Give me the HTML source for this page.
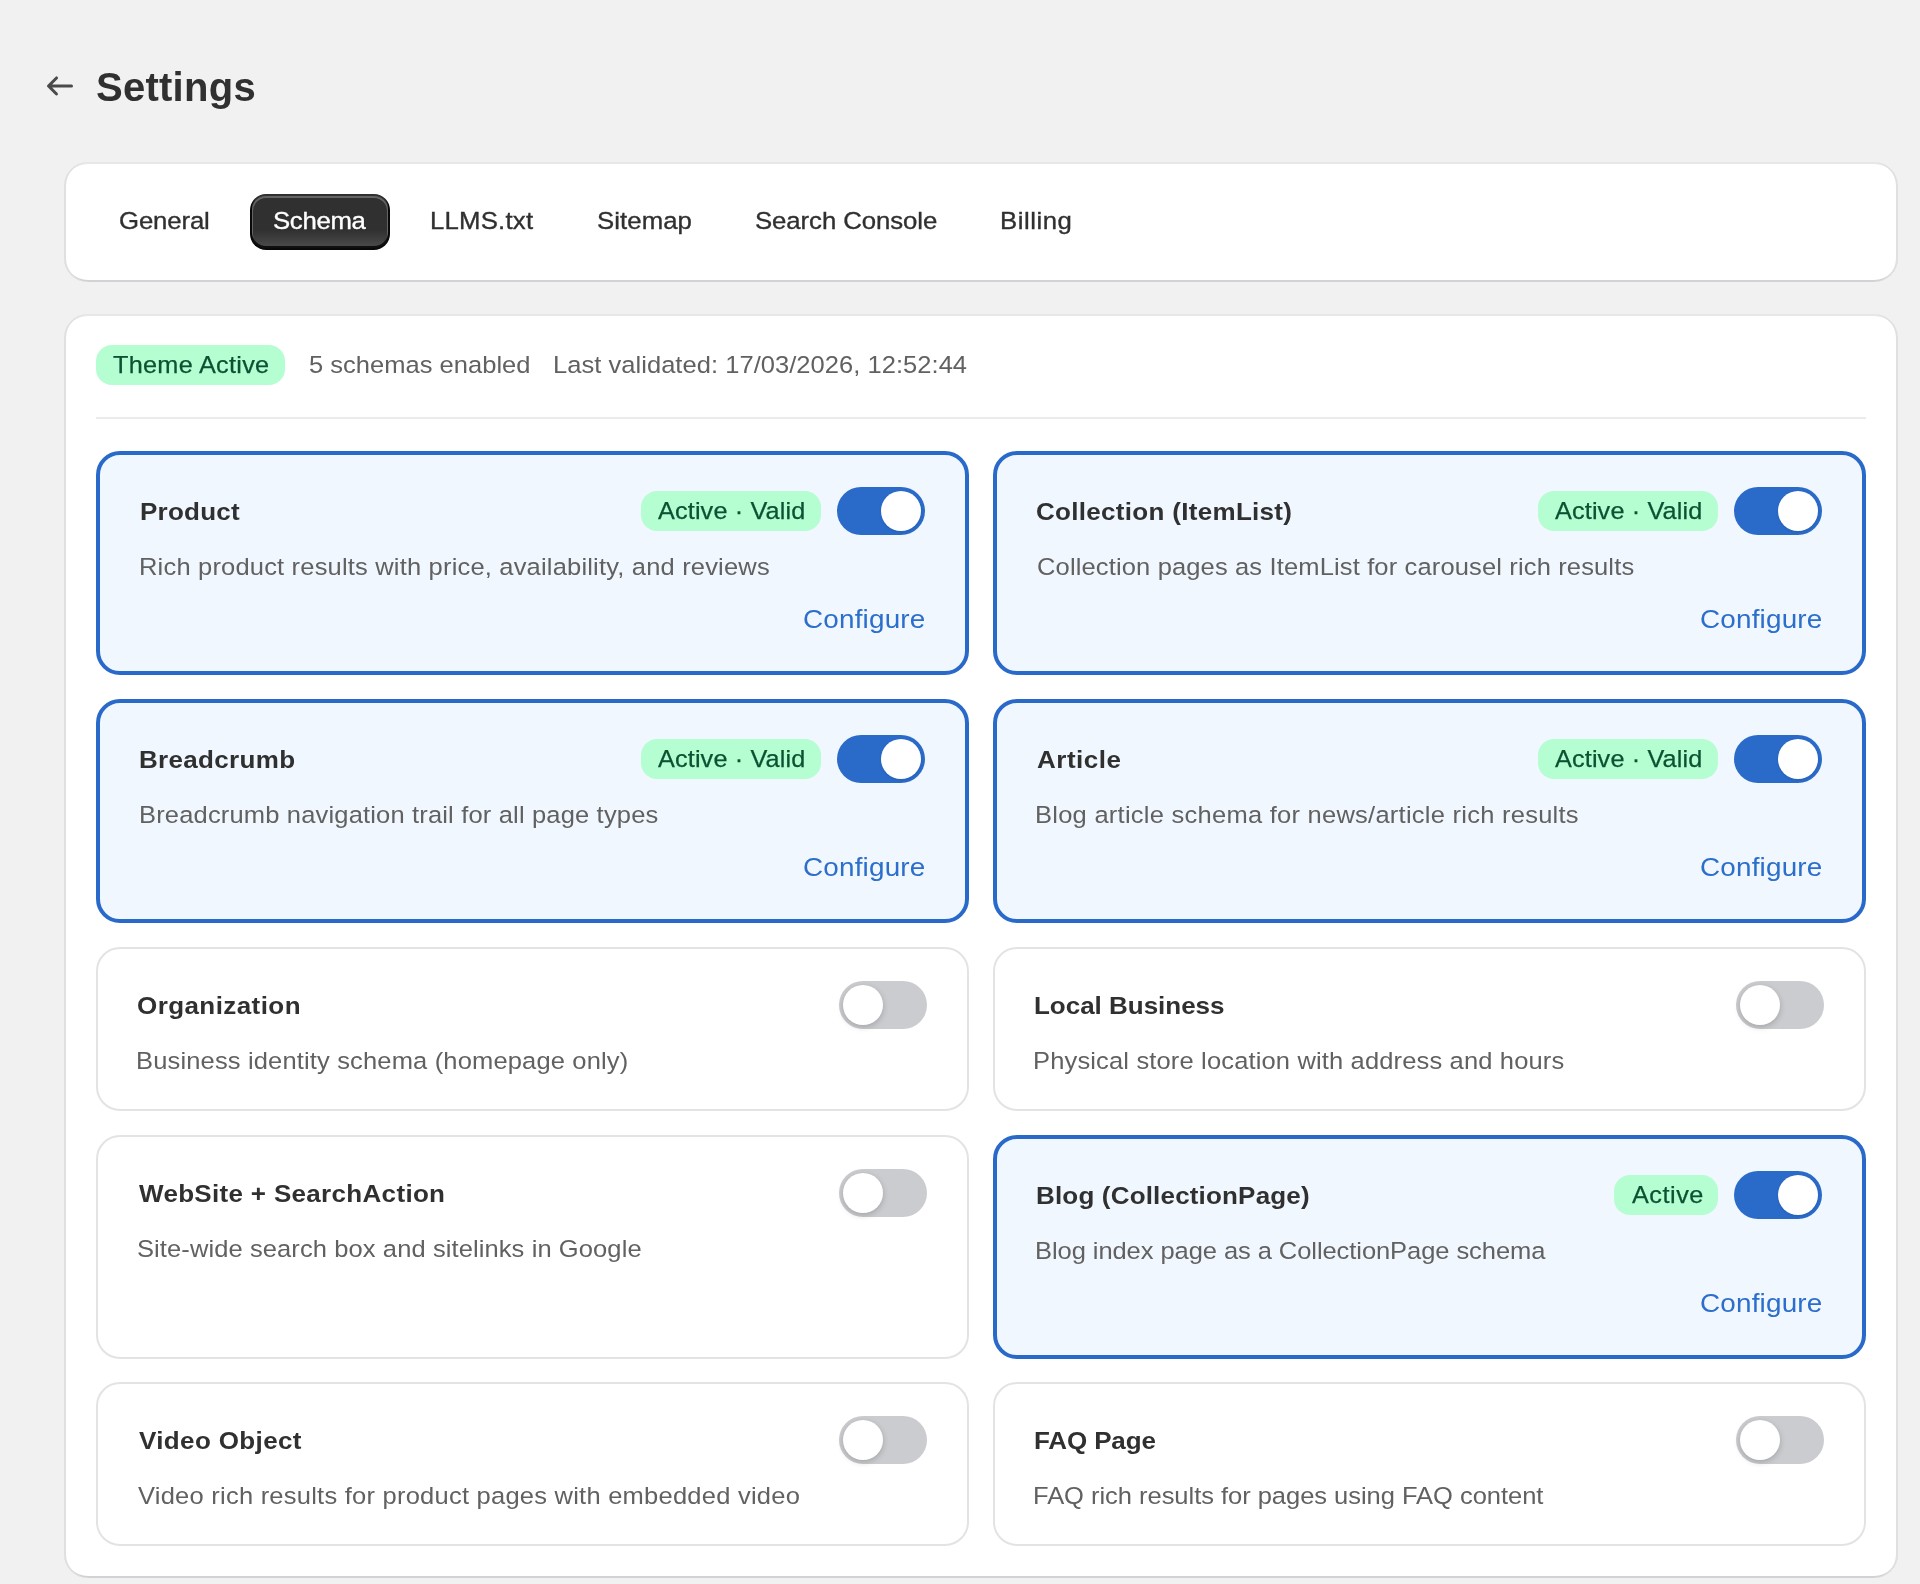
<!DOCTYPE html>
<html lang="en">
<head>
<meta charset="utf-8">
<title>Settings</title>
<style>
*{box-sizing:border-box;margin:0;padding:0}
html,body{width:1920px;height:1584px;overflow:hidden;background:#f1f1f1}
body{font-family:"Liberation Sans",Arial,sans-serif;color:#303030;position:relative}
.abs{position:absolute}
.x{position:absolute;white-space:nowrap;height:40px;line-height:40px;transform-origin:0 0}
.layer{position:absolute;left:0;top:0;width:1920px;height:1584px;will-change:transform}
.back{left:40px;top:65.75px;width:40px;height:40px}
.h1{font-size:40.0px;font-weight:700;color:#303030}
.panel{background:#fff;border-radius:24px;box-shadow:inset 2px 0 0 #dfe0e2,inset -2px 0 0 #dfe0e2,inset 0 -2px 0 #d1d2d5,inset 0 2px 0 #e7e7e9}
.tabs{left:64px;top:162px;width:1834px;height:120px}
.main{left:64px;top:314px;width:1834px;height:1264px}
.tab{transform:scaleX(1.06);font-size:24.3px;color:#303030;-webkit-text-stroke:0.35px #303030}
.tab.on{color:#fff;-webkit-text-stroke:0.35px #fff}
.pill{left:250px;top:194px;width:140px;height:56px;border-radius:16px;background:linear-gradient(180deg,rgba(48,48,48,0) 63.53%,rgba(255,255,255,.15) 100%) #303030;box-shadow:inset 0 -2px 0 2px rgba(0,0,0,.8),inset 0 0 0 2px #303030,inset 0 1px 0 3px rgba(255,255,255,.25)}
.badge{position:absolute;background:#b4fed2;border-radius:16px;height:40px}
.bt{transform:scaleX(1.04);font-size:24.3px;color:#0c5132;-webkit-text-stroke:0.25px #0c5132}
.meta{transform:scaleX(1.05);font-size:24.3px;color:#616161}
.rule{left:96px;top:417px;width:1770px;height:2px;background:#ebebeb}
.card{position:absolute;width:873px;border-radius:24px}
.card.a{border:4px solid #2869ca;background:#f1f7fe;height:224px}
.card.i{border:2px solid #e2e3e5;background:#fff;height:164px}
.card.i.tall{height:224px}
.t{transform:scaleX(1.07);font-size:24.3px;font-weight:700;color:#303030}
.d{transform:scaleX(1.05);font-size:24.3px;color:#616161}
.cfg{transform:scaleX(1.06);font-size:26.3px;color:#2c6ecb}
.tg{position:absolute;width:88px;height:48px;border-radius:24px}
.tg.on{background:#2a6bca}
.tg.off{background:#cbcccf}
.tg i{position:absolute;top:4px;width:40px;height:40px;border-radius:50%;background:#fff;box-shadow:0 2px 6px rgba(0,0,0,.2)}
.tg.on i{right:4px;box-shadow:0 1px 3px rgba(0,0,0,.12)}
.tg.off i{left:4px}
</style>
</head>
<body>
<div class="layer">
<svg class="abs back" viewBox="0 0 20 20" fill="#4a4a4a"><path d="M16.5 10a.75.75 0 0 1-.75.75h-9.69l2.72 2.72a.75.75 0 0 1-1.06 1.06l-4-4a.75.75 0 0 1 0-1.06l4-4a.75.75 0 1 1 1.06 1.06l-2.72 2.72h9.69a.75.75 0 0 1 .75.75Z"/></svg>
<h1 class="x h1" style="left:96.00px;top:66.64px;letter-spacing:0.262px">Settings</h1>
<div class="abs panel tabs"></div>
<div class="abs pill"></div>
<div class="x tab" style="left:119.49px;top:200.98px;letter-spacing:-0.126px">General</div>
<div class="x tab on" style="left:273.45px;top:200.98px;letter-spacing:-0.297px">Schema</div>
<div class="x tab" style="left:429.88px;top:200.98px;letter-spacing:0.195px">LLMS.txt</div>
<div class="x tab" style="left:596.72px;top:200.98px;letter-spacing:0.072px">Sitemap</div>
<div class="x tab" style="left:755.04px;top:200.98px;letter-spacing:-0.070px">Search Console</div>
<div class="x tab" style="left:999.88px;top:200.98px;letter-spacing:0.489px">Billing</div>
<div class="abs panel main"></div>
<div class="badge" style="left:96px;top:345px;width:188.5px"></div>
<div class="x bt" style="left:112.91px;top:345.18px;letter-spacing:0.266px">Theme Active</div>
<div class="x meta" style="left:309.09px;top:345.18px;letter-spacing:0.012px">5 schemas enabled</div>
<div class="x meta" style="left:553.40px;top:345.18px;letter-spacing:0.035px">Last validated: 17/03/2026, 12:52:44</div>
<div class="abs rule"></div>
<div class="card a" style="left:96px;top:451px"></div>
<div class="tg on" style="left:837px;top:487px"><i></i></div>
<div class="badge" style="left:640.8px;top:491px;width:180.5px"></div>
<div class="x bt" style="left:658.28px;top:490.98px;letter-spacing:0.119px">Active · Valid</div>
<a class="x cfg" style="left:803.16px;top:598.89px;letter-spacing:0.166px">Configure</a>
<h2 class="x t" style="left:139.91px;top:491.58px;letter-spacing:0.219px">Product</h2>
<p class="x d" style="left:139.40px;top:546.58px;letter-spacing:0.169px">Rich product results with price, availability, and reviews</p>
<div class="card a" style="left:993px;top:451px"></div>
<div class="tg on" style="left:1734px;top:487px"><i></i></div>
<div class="badge" style="left:1537.8px;top:491px;width:180.5px"></div>
<div class="x bt" style="left:1555.28px;top:490.98px;letter-spacing:0.119px">Active · Valid</div>
<a class="x cfg" style="left:1700.16px;top:598.89px;letter-spacing:0.166px">Configure</a>
<h2 class="x t" style="left:1036.43px;top:491.58px;letter-spacing:0.286px">Collection (ItemList)</h2>
<p class="x d" style="left:1036.60px;top:546.58px;letter-spacing:0.131px">Collection pages as ItemList for carousel rich results</p>
<div class="card a" style="left:96px;top:699px"></div>
<div class="tg on" style="left:837px;top:735px"><i></i></div>
<div class="badge" style="left:640.8px;top:739px;width:180.5px"></div>
<div class="x bt" style="left:658.28px;top:738.98px;letter-spacing:0.119px">Active · Valid</div>
<a class="x cfg" style="left:803.16px;top:846.89px;letter-spacing:0.166px">Configure</a>
<h2 class="x t" style="left:139.41px;top:739.58px;letter-spacing:0.300px">Breadcrumb</h2>
<p class="x d" style="left:138.90px;top:794.58px;letter-spacing:0.155px">Breadcrumb navigation trail for all page types</p>
<div class="card a" style="left:993px;top:699px"></div>
<div class="tg on" style="left:1734px;top:735px"><i></i></div>
<div class="badge" style="left:1537.8px;top:739px;width:180.5px"></div>
<div class="x bt" style="left:1555.28px;top:738.98px;letter-spacing:0.119px">Active · Valid</div>
<a class="x cfg" style="left:1700.16px;top:846.89px;letter-spacing:0.166px">Configure</a>
<h2 class="x t" style="left:1036.68px;top:739.58px;letter-spacing:0.488px">Article</h2>
<p class="x d" style="left:1035.46px;top:794.58px;letter-spacing:0.236px">Blog article schema for news/article rich results</p>
<div class="card i" style="left:96px;top:947px"></div>
<div class="tg off" style="left:839px;top:981px"><i></i></div>
<h2 class="x t" style="left:137.37px;top:985.58px;letter-spacing:0.395px">Organization</h2>
<p class="x d" style="left:136.46px;top:1040.58px;letter-spacing:0.142px">Business identity schema (homepage only)</p>
<div class="card i" style="left:993px;top:947px"></div>
<div class="tg off" style="left:1736px;top:981px"><i></i></div>
<h2 class="x t" style="left:1033.96px;top:985.58px;letter-spacing:-0.018px">Local Business</h2>
<p class="x d" style="left:1033.46px;top:1040.58px;letter-spacing:0.139px">Physical store location with address and hours</p>
<div class="card i tall" style="left:96px;top:1135px"></div>
<div class="tg off" style="left:839px;top:1169px"><i></i></div>
<h2 class="x t" style="left:138.89px;top:1173.58px;letter-spacing:0.298px">WebSite + SearchAction</h2>
<p class="x d" style="left:137.44px;top:1228.58px;letter-spacing:0.089px">Site-wide search box and sitelinks in Google</p>
<div class="card a" style="left:993px;top:1135px"></div>
<div class="tg on" style="left:1734px;top:1171px"><i></i></div>
<div class="badge" style="left:1614.0px;top:1175px;width:104.3px"></div>
<div class="x bt" style="left:1631.54px;top:1174.98px;letter-spacing:0.492px">Active</div>
<a class="x cfg" style="left:1700.16px;top:1282.89px;letter-spacing:0.166px">Configure</a>
<h2 class="x t" style="left:1035.97px;top:1175.58px;letter-spacing:0.165px">Blog (CollectionPage)</h2>
<p class="x d" style="left:1035.46px;top:1230.58px;letter-spacing:-0.070px">Blog index page as a CollectionPage schema</p>
<div class="card i" style="left:96px;top:1382px"></div>
<div class="tg off" style="left:839px;top:1416px"><i></i></div>
<h2 class="x t" style="left:138.67px;top:1420.58px;letter-spacing:0.340px">Video Object</h2>
<p class="x d" style="left:138.19px;top:1475.58px;letter-spacing:0.222px">Video rich results for product pages with embedded video</p>
<div class="card i" style="left:993px;top:1382px"></div>
<div class="tg off" style="left:1736px;top:1416px"><i></i></div>
<h2 class="x t" style="left:1033.96px;top:1420.58px;letter-spacing:-0.126px">FAQ Page</h2>
<p class="x d" style="left:1033.46px;top:1475.58px;letter-spacing:-0.032px">FAQ rich results for pages using FAQ content</p>
</div>
</body>
</html>
